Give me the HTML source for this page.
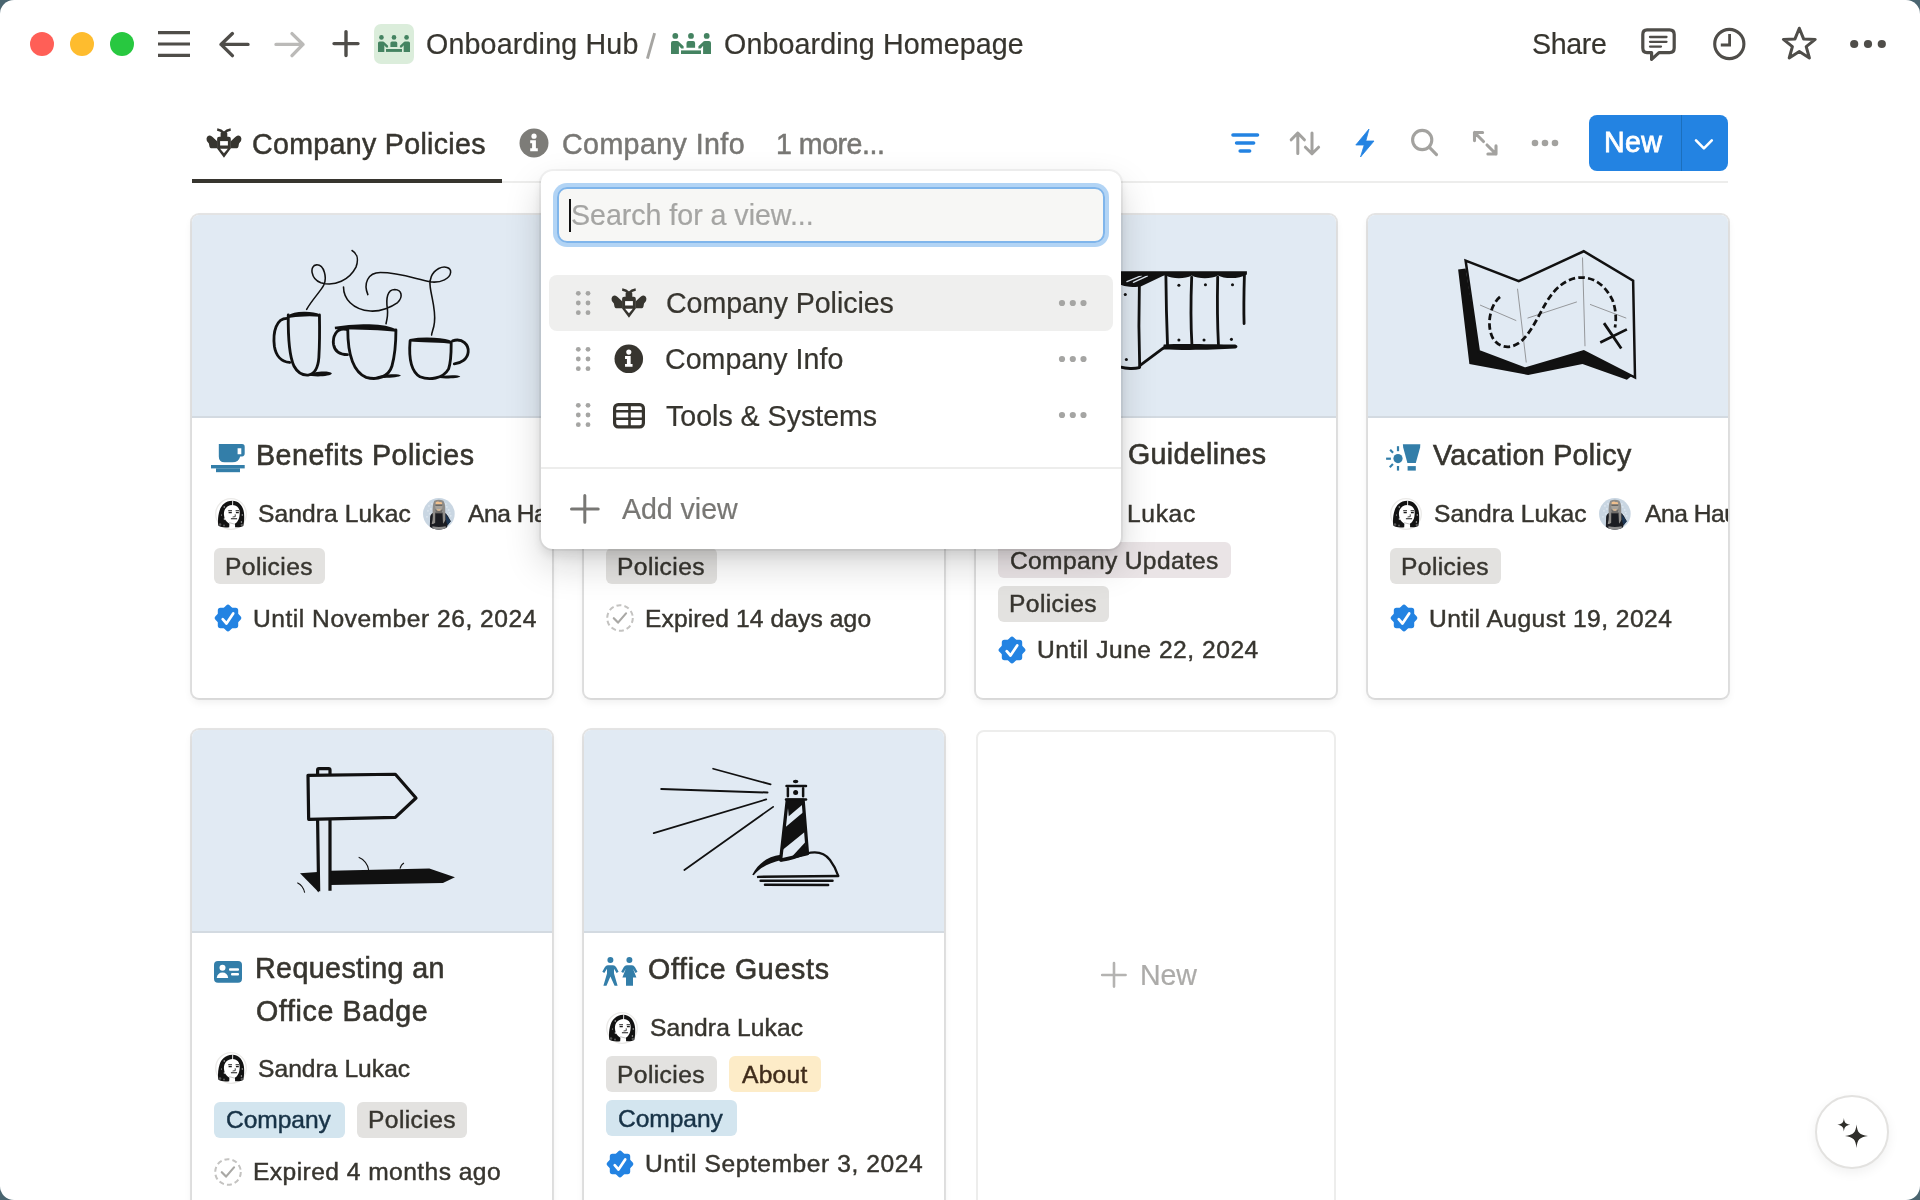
<!DOCTYPE html><html><head><meta charset="utf-8"><title>Onboarding Homepage</title><style>
html,body{margin:0;padding:0;width:1920px;height:1200px;overflow:hidden;background:#4a6570;}
#win{position:absolute;left:0;top:0;width:1920px;height:1200px;background:#fff;border-radius:14px;overflow:hidden;}
.a{position:absolute;}
.t{position:absolute;font-family:"Liberation Sans",sans-serif;white-space:nowrap;line-height:1;-webkit-font-smoothing:antialiased;will-change:transform;}
svg{position:absolute;overflow:visible;}
.card{position:absolute;width:360px;background:#fff;border-radius:7px;overflow:hidden;box-shadow:0 0 0 2px rgba(15,15,15,0.11),0 4px 8px rgba(15,15,15,0.07);}
.cover{position:absolute;left:0;top:0;width:360px;height:201px;background:#e1eaf3;border-bottom:2px solid #d3dae1;}
.tag{position:absolute;height:36px;border-radius:6px;background:#e3e2e0;}
</style></head><body><div id="win">
<div class="a" style="left:30px;top:32px;width:24px;height:24px;border-radius:50%;background:#ff5f57"></div>
<div class="a" style="left:70px;top:32px;width:24px;height:24px;border-radius:50%;background:#febc2e"></div>
<div class="a" style="left:110px;top:32px;width:24px;height:24px;border-radius:50%;background:#28c840"></div>
<svg style="left:0px;top:0px;width:1920px;height:80px" viewBox="0 0 1920 80" ><g stroke="#4f4d49" stroke-width="3.2" fill="none" stroke-linecap="butt">
<path d="M158,32.6 L190,32.6 M158,44 L190,44 M158,55.4 L190,55.4"/></g>
<g stroke="#4f4d49" stroke-width="3.4" fill="none" stroke-linecap="round" stroke-linejoin="round">
<path d="M248,44.4 L221,44.4 M232.4,33.6 L221,44.4 L232.4,55.6"/></g>
<g stroke="#bbbab8" stroke-width="3.4" fill="none" stroke-linecap="round" stroke-linejoin="round">
<path d="M276,44.4 L303,44.4 M292,33.6 L303,44.4 L292,55.6"/></g>
<g stroke="#4f4d49" stroke-width="3.4" fill="none" stroke-linecap="round">
<path d="M334,43.6 L358,43.6 M346,31.6 L346,55.6"/></g></svg>
<div class="a" style="left:374px;top:24px;width:40px;height:40px;border-radius:7px;background:#dbeddb"></div>
<svg style="left:378px;top:34.6px;width:32px;height:17px" viewBox="0 0 40 21" ><g fill="#448361">
<circle cx="4.3" cy="2.9" r="2.9"/><circle cx="20" cy="2.9" r="2.9"/><circle cx="35.7" cy="2.9" r="2.9"/>
<path d="M0,10 Q0,8 2,8 L6,8 Q7.4,8 8.3,9.2 L12.6,13.2 L12.6,15.6 L10.2,15.6 L7.9,12.8 L7.9,21 L0,21 Z"/>
<path d="M40,10 Q40,8 38,8 L34,8 Q32.6,8 31.7,9.2 L27.4,13.2 L27.4,15.6 L29.8,15.6 L32.1,12.8 L32.1,21 L40,21 Z"/>
<path d="M15.5,10 Q15.5,8 17.5,8 L22.1,8 Q24.1,8 24.1,10 L24.1,14.8 L15.5,14.8 Z"/>
<rect x="10" y="17.4" width="20" height="3.6"/></g></svg>
<svg style="left:671px;top:32.8px;width:40px;height:21px" viewBox="0 0 40 21" ><g fill="#448361">
<circle cx="4.3" cy="2.9" r="2.9"/><circle cx="20" cy="2.9" r="2.9"/><circle cx="35.7" cy="2.9" r="2.9"/>
<path d="M0,10 Q0,8 2,8 L6,8 Q7.4,8 8.3,9.2 L12.6,13.2 L12.6,15.6 L10.2,15.6 L7.9,12.8 L7.9,21 L0,21 Z"/>
<path d="M40,10 Q40,8 38,8 L34,8 Q32.6,8 31.7,9.2 L27.4,13.2 L27.4,15.6 L29.8,15.6 L32.1,12.8 L32.1,21 L40,21 Z"/>
<path d="M15.5,10 Q15.5,8 17.5,8 L22.1,8 Q24.1,8 24.1,10 L24.1,14.8 L15.5,14.8 Z"/>
<rect x="10" y="17.4" width="20" height="3.6"/></g></svg>
<div class="t" style="left:426.00px;top:30.00px;font-size:28.6px;font-weight:400;color:#37352f;letter-spacing:0.192px;-webkit-text-stroke:0.22px #37352f;">Onboarding Hub</div>
<svg style="left:640px;top:28px;width:20px;height:36px" viewBox="0 0 20 36" ><path d="M14.6,5.2 L7.4,30.6" stroke="#a6a5a2" stroke-width="2.9" stroke-linecap="butt"/></svg>
<div class="t" style="left:723.50px;top:30.00px;font-size:28.6px;font-weight:400;color:#37352f;letter-spacing:0.139px;-webkit-text-stroke:0.22px #37352f;">Onboarding Homepage</div>
<div class="t" style="left:1531.70px;top:30.20px;font-size:28.6px;font-weight:400;color:#37352f;letter-spacing:-0.350px;-webkit-text-stroke:0.22px #37352f;">Share</div>
<svg style="left:0px;top:0px;width:1920px;height:80px" viewBox="0 0 1920 80" ><g stroke="#4f4d49" stroke-width="3.2" fill="none" stroke-linejoin="round" stroke-linecap="round">
<path d="M1647,29.8 L1669.5,29.8 Q1674.2,29.8 1674.2,34.5 L1674.2,48 Q1674.2,52.6 1669.5,52.6 L1659,52.6 L1651.6,59.4 L1651.6,52.6 L1647,52.6 Q1642.8,52.6 1642.8,48 L1642.8,34.5 Q1642.8,29.8 1647,29.8 Z"/>
</g>
<g stroke="#4f4d49" stroke-width="2.3" stroke-linecap="round"><path d="M1650,37 L1666.5,37 M1650,41.8 L1666.5,41.8 M1650,46.6 L1661,46.6"/></g>
<circle cx="1729.3" cy="44" r="14.6" stroke="#4f4d49" stroke-width="3.1" fill="none"/>
<path d="M1729.6,34 L1729.6,45 L1720.8,45" stroke="#4f4d49" stroke-width="2.8" fill="none"/>
<path d="M1799.3,28.2 L1803.6,38.9 L1815.2,39.4 L1806.2,46.6 L1809.4,58 L1799.3,51.6 L1789.2,58 L1792.4,46.6 L1783.4,39.4 L1795,38.9 Z" stroke="#4f4d49" stroke-width="3" fill="none" stroke-linejoin="round"/>
<g fill="#4f4d49"><circle cx="1854.2" cy="44" r="4.1"/><circle cx="1868" cy="44" r="4.1"/><circle cx="1881.8" cy="44" r="4.1"/></g></svg>
<div class="a" style="left:192px;top:181px;width:1536px;height:2px;background:#ededec"></div>
<div class="a" style="left:192px;top:179px;width:310px;height:4px;background:#37352f"></div>
<svg style="left:206px;top:128px;width:36.0px;height:30.0px" viewBox="0 0 36 30" ><g fill="#37352f">
<path d="M0.5,10.8 Q1.2,7.4 3.9,7.5 Q5.2,7.6 6.6,9 L11.4,13.6 L11.4,20.2 L4.9,20.2 Q3.9,20.2 3.5,18.8 L2.9,15.6 Q0.1,13.2 0.5,10.8 Z"/>
<path d="M35.42,10.8 Q34.72,7.4 32.02,7.5 Q30.72,7.6 29.32,9 L24.52,13.6 L24.52,20.2 L31.02,20.2 Q32.02,20.2 32.42,18.8 L33.02,15.6 Q35.82,13.2 35.42,10.8 Z"/>
<path d="M14.6,5.6 Q14.6,4.2 16,4.2 L19.9,4.2 Q21.3,4.2 21.3,5.6 L21.3,8.7 L22.8,8.7 Q24.8,8.7 24.8,10.7 L24.8,20.6 L17.96,29.8 L11.1,20.6 L11.1,10.7 Q11.1,8.7 13.1,8.7 L14.6,8.7 Z"/>
</g>
<rect x="14.1" y="13.1" width="7.8" height="4.4" fill="#fff"/>
<path d="M14.1,20.8 L21.8,20.8 L17.96,25.3 Z" fill="#fff"/>
<path d="M11.2,1.5 Q15,2 17.96,5.2 Q20.9,2 24.7,1.5" stroke="#37352f" stroke-width="2.7" fill="none" stroke-linecap="butt" stroke-linejoin="round"/></svg>
<div class="t" style="left:252.30px;top:129.90px;font-size:28.6px;font-weight:400;color:#37352f;letter-spacing:0.313px;-webkit-text-stroke:0.5px #37352f;">Company Policies</div>
<svg style="left:519.0px;top:128.0px;width:30.0px;height:30.0px" viewBox="0 0 30 30" ><circle cx="15" cy="15" r="14.5" fill="#7d7c78"/>
<circle cx="15" cy="8.2" r="2.6" fill="#fff"/>
<path d="M11.2,12.2 L16.9,12.2 L16.9,20.2 L18.8,20.2 L18.8,23.2 L11.2,23.2 L11.2,20.2 L13.1,20.2 L13.1,15.2 L11.2,15.2 Z" fill="#fff"/></svg>
<div class="t" style="left:562.00px;top:129.90px;font-size:28.6px;font-weight:400;color:#787774;letter-spacing:0.418px;-webkit-text-stroke:0.5px #787774;">Company Info</div>
<div class="t" style="left:775.50px;top:129.90px;font-size:28.6px;font-weight:400;color:#787774;letter-spacing:-0.500px;-webkit-text-stroke:0.5px #787774;">1 more...</div>
<svg style="left:1200px;top:100px;width:560px;height:80px" viewBox="0 0 560 80" ><g stroke="#2383e2" stroke-width="3.6" stroke-linecap="round">
<path d="M33,35 L57.5,35 M36.6,43 L53.6,43 M40.2,51 L49.6,51"/></g>
<g stroke="#a3a29f" stroke-width="3" fill="none" stroke-linecap="round" stroke-linejoin="round">
<path d="M97.8,33 L97.8,53.5 M91.2,39.8 L97.8,33 L104.4,39.8"/>
<path d="M112,33 L112,53.8 M105.4,47.2 L112,53.8 L118.6,47.2"/>
</g>
<path d="M169,29 L155.8,45 L164.2,45 L160.5,57 L174,41 L165.8,41 Z" fill="#2383e2" stroke="#2383e2" stroke-width="0.8" stroke-linejoin="round"/>
<g stroke="#a3a29f" stroke-width="3.1" fill="none" stroke-linecap="round" stroke-linejoin="round">
<circle cx="222.2" cy="40" r="9.6"/><path d="M229.2,47.2 L236.5,54.6"/>
<path d="M274.5,32.5 L283.5,41.5 M274.5,40.6 L274.5,32.5 L282.6,32.5 M287,45 L296,54 M296,45.9 L296,54 L287.9,54"/>
</g>
<g fill="#a3a29f"><circle cx="335" cy="43" r="3.3"/><circle cx="345" cy="43" r="3.3"/><circle cx="355" cy="43" r="3.3"/></g></svg>
<div class="a" style="left:1589px;top:115px;width:139px;height:56px;border-radius:8px;background:#2383e2"></div>
<div class="a" style="left:1680.5px;top:115px;width:1.2px;height:56px;background:rgba(0,40,60,0.22)"></div>
<div class="t" style="left:1604.30px;top:128.00px;font-size:28.6px;font-weight:400;color:#fff;letter-spacing:0.350px;-webkit-text-stroke:0.8px #fff;">New</div>
<svg style="left:1680px;top:115px;width:48px;height:56px" viewBox="0 0 48 56" ><path d="M16,25.4 L23.9,33.3 L31.8,25.4" stroke="#fff" stroke-width="2.6" fill="none" stroke-linecap="round" stroke-linejoin="round"/></svg>
<div class="card" style="left:192px;top:215px;height:483px"><div class="cover"></div></div>
<div class="card" style="left:584px;top:215px;height:483px"><div class="cover"></div></div>
<div class="card" style="left:976px;top:215px;height:483px"><div class="cover"></div></div>
<div class="card" style="left:1368px;top:215px;height:483px"><div class="cover"></div></div>
<div class="card" style="left:192px;top:730px;height:600px"><div class="cover"></div></div>
<div class="card" style="left:584px;top:730px;height:600px"><div class="cover"></div></div>
<div class="a" style="left:976px;top:730px;width:356px;height:600px;border:2px solid #ededec;border-radius:8px"></div>
<svg style="left:250px;top:230px;width:240px;height:170px" viewBox="0 0 1694 1200" ><g stroke="#111" fill="none" stroke-linecap="round" stroke-linejoin="round" stroke-width="20">
<path d="M270,600 C268,780 282,900 310,960 C338,1012 378,1026 410,1024 C452,1018 480,978 486,900 C492,800 492,700 490,600"/>
<path d="M266,624 C185,620 160,720 172,820 C182,885 220,930 280,935"/>
<path d="M690,698 C690,850 716,995 820,1040 C900,1064 980,1034 1002,960 C1024,880 1030,780 1030,706"/>
<path d="M682,702 C605,684 582,760 590,810 C600,862 640,880 688,880"/>
<path d="M1130,782 C1120,900 1140,1000 1200,1036 C1262,1062 1362,1052 1402,980 C1422,920 1420,850 1420,792"/>
<path d="M1430,782 C1502,760 1545,812 1540,862 C1535,912 1490,940 1442,945"/>
</g>
<g stroke="#111" fill="none" stroke-linecap="round" stroke-linejoin="round" stroke-width="11">
<path d="M400,560 C440,490 500,430 520,390 C545,340 525,244 470,246 C418,250 428,345 500,372 C600,402 702,352 748,262 C770,202 752,162 720,145"/>
<path d="M660,402 C660,482 722,562 850,572 C922,577 1000,542 1042,512 C1082,472 1072,422 1022,420 C970,420 958,482 970,560 C975,600 965,640 960,662"/>
<path d="M832,456 C800,380 830,300 920,300 C1050,300 1152,340 1272,366 C1352,376 1412,340 1416,300 C1420,262 1372,252 1332,272 C1282,300 1262,352 1272,402 C1282,482 1312,562 1302,652 C1297,702 1282,722 1282,742"/>
</g>
<g fill="#111">
<path d="M270,612 C320,578 440,580 492,604 C440,598 330,600 270,612 Z" stroke="#111" stroke-width="18"/>
<path d="M600,692 C750,664 950,668 1032,710 C950,700 760,692 600,692 Z" stroke="#111" stroke-width="18"/>
<path d="M1130,778 C1230,760 1380,768 1422,794 C1360,786 1230,786 1130,778 Z" stroke="#111" stroke-width="18"/>
<path d="M400,1026 C450,996 560,992 578,1012 C572,1036 452,1040 400,1026 Z"/>
<path d="M880,1040 C930,1016 1050,1012 1066,1026 C1056,1044 930,1050 880,1040 Z"/>
<path d="M1300,1042 C1360,1024 1470,1020 1484,1034 C1474,1048 1360,1052 1300,1042 Z"/>
</g></svg>
<svg style="left:1115px;top:250px;width:150px;height:130px" viewBox="0 0 1385 1200" ><g stroke="#111" fill="none" stroke-linecap="round" stroke-linejoin="round" stroke-width="26">
<path d="M470,240 C472,500 478,700 485,880"/>
<path d="M708,250 C700,450 700,700 710,870"/>
<path d="M948,250 C944,450 946,700 955,870"/>
<path d="M1195,225 C1190,400 1188,560 1192,680"/>
<path d="M225,330 C218,600 222,900 228,1080"/>
<path d="M445,905 L232,1065"/>
<path d="M440,225 L232,325 C180,335 90,322 55,308"/>
<path d="M55,1082 C100,1096 180,1098 225,1086"/>
</g>
<path d="M55,205 L445,222 L232,322 C180,332 90,320 55,306 Z" fill="#111"/><path d="M110,292 L245,236 M170,298 L300,238" stroke="#e1eaf3" stroke-width="12" fill="none" stroke-linecap="round"/>
<path d="M55,195 L1218,195 L1218,225 C1150,268 1010,268 950,235 C890,268 770,268 708,235 C650,268 530,268 470,235 L55,240 Z" fill="#111"/>
<path d="M450,872 C600,862 900,870 1110,872 C1140,880 1135,905 1110,910 C900,925 600,925 440,918 Z" fill="#111"/>
<g fill="#111"><circle cx="590" cy="325" r="14"/><circle cx="835" cy="320" r="14"/><circle cx="1085" cy="320" r="14"/>
<circle cx="590" cy="830" r="14"/><circle cx="822" cy="830" r="14"/><circle cx="1075" cy="825" r="14"/>
<circle cx="95" cy="410" r="14"/><circle cx="105" cy="1010" r="14"/></g></svg>
<svg style="left:1440px;top:240px;width:210px;height:150px" viewBox="0 0 1680 1200" ><path d="M145,235 L205,228 L312,890 L680,1030 L1150,888 L1545,1078 L1495,1118 L1140,992 L705,1080 L235,992 Z" fill="#111"/>
<path d="M205,165 L630,330 L1150,90 L1545,325 L1560,1100 L1150,890 L680,1030 L310,890 Z" fill="#e1eaf3" stroke="#111" stroke-width="20" stroke-linejoin="miter"/>
<g stroke="#8a8c8e" stroke-width="7" fill="none">
<path d="M620,390 L690,980"/><path d="M1140,140 L1160,850"/>
<path d="M320,520 L610,645"/><path d="M700,625 L1095,495"/><path d="M1200,515 L1490,625"/></g>
<path d="M480,455 C400,520 370,680 420,780 C470,870 580,880 660,800 C740,720 790,600 850,500 C920,380 1020,300 1130,300 C1250,300 1330,380 1380,480 C1410,560 1410,640 1400,700" stroke="#111" stroke-width="22" fill="none" stroke-dasharray="52 26"/>
<path d="M1312,665 L1450,868 M1282,820 L1495,715" stroke="#111" stroke-width="22" fill="none"/></svg>
<svg style="left:280px;top:750px;width:200px;height:160px" viewBox="0 0 1500 1200" ><path d="M150,925 L282,915 L292,1068 Z" fill="#111"/>
<path d="M375,905 L1120,888 L1312,955 L1222,998 L375,1012 Z" fill="#111"/>
<g stroke="#111" stroke-width="24" fill="none" stroke-linejoin="round">
<path d="M210,190 L865,182 L1020,360 L865,505 L215,520 Z"/>
<path d="M282,185 L282,150 Q282,140 292,140 L365,140 Q375,140 375,150 L375,185"/>
<path d="M282,525 L290,1060 M375,525 L375,1055"/>
</g>
<g stroke="#111" stroke-width="8" fill="none">
<path d="M590,805 C630,820 660,860 665,900"/><path d="M900,890 C905,870 915,855 930,848"/>
<path d="M130,995 C160,1010 180,1040 185,1070"/></g></svg>
<svg style="left:640px;top:750px;width:220px;height:150px" viewBox="0 0 1760 1200" ><g stroke="#111" fill="none" stroke-linecap="round">
<path d="M585,150 L1045,275" stroke-width="14"/>
<path d="M170,312 L1020,340" stroke-width="16"/>
<path d="M110,665 L1010,395" stroke-width="14"/>
<path d="M355,960 L1065,455" stroke-width="14"/>
</g>
<path d="M1178,400 L1305,400 L1340,830 L1125,880 Z" fill="none" stroke="#111" stroke-width="26" stroke-linejoin="round"/>
<path d="M1178,400 L1305,400 L1308,430 L1190,530 Z" fill="#111"/>
<path d="M1160,620 L1315,490 L1325,650 L1140,800 Z" fill="#111"/>
<path d="M1320,740 L1340,830 L1200,870 Z" fill="#111"/>
<g stroke="#111" stroke-width="20" fill="none" stroke-linecap="round">
<path d="M1168,395 L1328,395"/><path d="M1172,287 L1328,287"/>
<path d="M1183,305 L1183,370 M1305,305 L1305,370"/>
<path d="M945,1015 L1585,1008"/><path d="M965,1045 L1540,1045"/><path d="M1000,1078 L1505,1080"/>
</g>
<circle cx="1245" cy="340" r="20" fill="#111"/>
<ellipse cx="1245" cy="252" rx="22" ry="14" fill="#111"/>
<path d="M898,998 C950,900 1030,850 1125,838 L1130,880 C1040,900 960,940 910,1002 Z" fill="#111"/>
<path d="M1130,885 C1200,880 1260,850 1330,830 C1400,810 1470,815 1520,880 C1550,920 1570,960 1585,1005" stroke="#111" stroke-width="18" fill="none" stroke-linecap="round"/></svg>
<svg style="left:211px;top:444px;width:34px;height:28.3px" viewBox="0 0 34 28.3" ><g fill="#337ea9">
<path d="M7.8,0 L31,0 Q33.7,0 33.7,2.8 L33.7,9.6 Q33.7,12.4 31,12.4 L29.2,12.4 Q27.5,18.3 21.5,18.3 L13.5,18.3 Q7.8,18.3 7.8,12.5 Z M26.6,4.3 L26.6,10.3 L30.3,10.3 L30.3,4.3 Z" fill-rule="evenodd"/>
<rect x="0" y="21" width="33.7" height="3.4"/>
<rect x="5" y="24.3" width="24" height="3.9"/></g></svg>
<div class="t" style="left:255.75px;top:440.80px;font-size:28.6px;font-weight:400;color:#37352f;letter-spacing:0.516px;-webkit-text-stroke:0.6px #37352f;">Benefits Policies</div>
<svg style="left:214.5px;top:498.2px;width:32px;height:32px" viewBox="0 0 32 32" ><circle cx="16" cy="16" r="15.3" fill="#fff" stroke="#ebeae8" stroke-width="1.3"/>
<path fill-rule="evenodd" fill="#121212" d="M17.3,2.8 C10,2.8 6,8 4.6,12.5 C3.4,16 2.6,21 3.2,27.5 C6,29.5 10.5,29.6 14.2,29.2 L14.4,25.8 C11,24 9,20.5 8.9,16.3 C8.8,10.5 12.5,6.9 17.6,6.9 C22.5,6.9 24.7,10.5 24.7,15 C24.7,20 23,24 20,25.6 L20.1,29.2 C23.5,29.6 26.5,29 28.3,28 C29.2,24 29.4,19 29,15 C28.4,9 24.5,2.8 17.3,2.8 Z"/>
<path d="M17.7,2.4 L17.6,7.2" stroke="#fff" stroke-width="0.9"/>
<g fill="#fff" opacity="0.7"><circle cx="9.3" cy="9" r="0.8"/><circle cx="9.6" cy="21.1" r="1"/><circle cx="27.3" cy="17" r="0.7"/><circle cx="6.5" cy="17" r="0.6"/><circle cx="26.4" cy="24" r="0.7"/></g>
<g fill="#888" opacity="0.6"><circle cx="5" cy="26.5" r="1.3"/><circle cx="26.8" cy="27" r="1.2"/><circle cx="9" cy="27.5" r="1"/></g>
<path d="M13.2,12.7 L17,12.7 M13.6,14.6 L16.8,14.6 M20.6,12.7 L24,12.7 M20.9,14.6 L23.8,14.6 M15.9,20.7 L22.1,20.7" stroke="#1a1a1a" stroke-width="1.05" fill="none"/>
<path d="M20.2,16.3 L20.3,18.6 L17.6,19" stroke="#1a1a1a" stroke-width="0.8" fill="none"/>
<path d="M14.2,24.7 L20,26.2" stroke="#999" stroke-width="0.6" fill="none"/></svg>
<div class="t" style="left:258.00px;top:501.70px;font-size:24.6px;font-weight:400;color:#37352f;letter-spacing:0.091px;-webkit-text-stroke:0.45px #37352f;">Sandra Lukac</div>
<svg style="left:423px;top:498px;width:31.7px;height:31.7px" viewBox="0 0 32 32" ><defs><clipPath id="ac1"><circle cx="16" cy="16" r="16"/></clipPath></defs>
<circle cx="16" cy="16" r="16" fill="#c9d6e2"/>
<g fill="#e3ebf3" opacity="0.8"><circle cx="6" cy="8" r="0.9"/><circle cx="8" cy="11" r="0.9"/><circle cx="5" cy="13" r="0.9"/><circle cx="7" cy="16" r="0.9"/><circle cx="9" cy="6" r="0.9"/><circle cx="4" cy="19" r="0.9"/><circle cx="24" cy="9" r="0.9"/><circle cx="26" cy="12" r="0.9"/><circle cx="27" cy="15" r="0.9"/><circle cx="23" cy="6" r="0.9"/><circle cx="28" cy="18" r="0.9"/><circle cx="25" cy="17" r="0.9"/></g>
<g clip-path="url(#ac1)">
<path d="M6.8,33 L7.2,19 Q7.8,15.2 11.5,14.6 L20.5,14.6 Q23.6,15 25,18 L28,23.5 L24.8,27.5 L23.8,31 L22,33 Z" fill="#1b1d22"/>
<path d="M22.5,15.6 L28,23.5 L24.8,27.5 L23.6,24 Z" fill="#1c3552"/>
<path d="M11.4,2.8 Q16,0.8 20.6,2.8 Q22.3,5.5 22.4,9.5 L22.6,22 Q21.6,25 20.2,26 L19.6,13 L12.4,13 L12.3,25 Q10,27 8.8,26 Q10.3,21 9.8,16 Q9.6,12 9.9,9 Q10.1,5.5 11.4,2.8 Z" fill="#8e8c89"/>
<rect x="12.4" y="11.5" width="7.2" height="4" fill="#6f6d6a"/><ellipse cx="16" cy="8.6" rx="3.7" ry="4.6" fill="#a7a29b"/>
<path d="M12.8,4.4 Q15,3 17,4.2 Q18.6,3.4 19.4,5 L19.2,6.2 L12.7,6.2 Z" fill="#f0c08e"/>
<path d="M12.6,7.2 L19.4,7.2" stroke="#3a3a3a" stroke-width="0.9"/>
<path d="M14.2,10.8 Q16,12.4 17.8,10.8 L17.2,12.6 L14.8,12.6 Z" fill="#f0c08e"/>
<path d="M9.5,28.6 Q16,30 23,28.6 L23,33 L9.5,33 Z" fill="#8d8d8d"/>
</g></svg>
<div class="t" style="left:468.00px;top:501.70px;font-size:24.6px;font-weight:400;color:#37352f;letter-spacing:-0.450px;-webkit-text-stroke:0.45px #37352f;width:84.0px;overflow:hidden;">Ana Hauser</div>
<div class="tag" style="left:214px;top:548px;width:111px;background:#e3e2e0"></div>
<div class="t" style="left:225.20px;top:555.00px;font-size:24.6px;font-weight:400;color:#37352f;letter-spacing:0.400px;-webkit-text-stroke:0.45px #37352f;">Policies</div>
<svg style="left:214.3px;top:604.4px;width:28px;height:28px" viewBox="0 0 28 28" ><g fill="#2383e2"><rect x="3.8" y="3.8" width="20.4" height="20.4" rx="2.6"/>
<rect x="3.8" y="3.8" width="20.4" height="20.4" rx="2.6" transform="rotate(45 14 14)"/></g>
<path d="M8.7,15.2 L12.5,19.5 L19.2,9.4" stroke="#fff" stroke-width="2.7" fill="none" stroke-linecap="round" stroke-linejoin="round"/></svg>
<div class="t" style="left:253.30px;top:607.20px;font-size:24.6px;font-weight:400;color:#37352f;letter-spacing:0.514px;-webkit-text-stroke:0.45px #37352f;">Until November 26, 2024</div>
<div class="tag" style="left:606px;top:548px;width:111px;background:#e3e2e0"></div>
<div class="t" style="left:617.20px;top:555.00px;font-size:24.6px;font-weight:400;color:#37352f;letter-spacing:0.400px;-webkit-text-stroke:0.45px #37352f;">Policies</div>
<svg style="left:606px;top:604px;width:28px;height:28px" viewBox="0 0 28 28" ><circle cx="14" cy="14" r="12.8" fill="none" stroke="#c4c3c1" stroke-width="2" stroke-dasharray="5 3.05"/>
<path d="M7.8,14.2 L12,18.6 L20,9.4" stroke="#a9a8a5" stroke-width="2.2" fill="none" stroke-linecap="round" stroke-linejoin="round"/></svg>
<div class="t" style="left:645.40px;top:607.20px;font-size:24.6px;font-weight:400;color:#37352f;letter-spacing:0.103px;-webkit-text-stroke:0.45px #37352f;">Expired 14 days ago</div>
<div class="t" style="left:1128.00px;top:440.40px;font-size:28.6px;font-weight:400;color:#37352f;letter-spacing:0.333px;-webkit-text-stroke:0.6px #37352f;">Guidelines</div>
<div class="t" style="left:1127.00px;top:501.70px;font-size:24.6px;font-weight:400;color:#37352f;letter-spacing:0.650px;-webkit-text-stroke:0.45px #37352f;">Lukac</div>
<div class="tag" style="left:998px;top:542px;width:232.6px;background:#eae4e6"></div>
<div class="t" style="left:1009.80px;top:548.50px;font-size:24.6px;font-weight:400;color:#37352f;letter-spacing:0.336px;-webkit-text-stroke:0.45px #37352f;">Company Updates</div>
<div class="tag" style="left:998px;top:586.2px;width:110.7px;background:#e3e2e0"></div>
<div class="t" style="left:1009.20px;top:592.30px;font-size:24.6px;font-weight:400;color:#37352f;letter-spacing:0.400px;-webkit-text-stroke:0.45px #37352f;">Policies</div>
<svg style="left:998.2px;top:636px;width:28px;height:28px" viewBox="0 0 28 28" ><g fill="#2383e2"><rect x="3.8" y="3.8" width="20.4" height="20.4" rx="2.6"/>
<rect x="3.8" y="3.8" width="20.4" height="20.4" rx="2.6" transform="rotate(45 14 14)"/></g>
<path d="M8.7,15.2 L12.5,19.5 L19.2,9.4" stroke="#fff" stroke-width="2.7" fill="none" stroke-linecap="round" stroke-linejoin="round"/></svg>
<div class="t" style="left:1037.40px;top:638.00px;font-size:24.6px;font-weight:400;color:#37352f;letter-spacing:0.519px;-webkit-text-stroke:0.45px #37352f;">Until June 22, 2024</div>
<svg style="left:1380px;top:435px;width:41px;height:36px" viewBox="0 0 41 36" ><g fill="#337ea9">
<circle cx="18" cy="23.6" r="4.6"/>
<rect x="16.9" y="11.2" width="2.2" height="5"/>
<rect x="16.9" y="31" width="2.2" height="4.6"/>
<rect x="6.1" y="22.6" width="4.8" height="2.2"/>
<path d="M9.4,15.6 L10.9,14.1 L13.8,17 L12.3,18.5 Z"/>
<path d="M9,31.4 L10.5,32.9 L13.7,29.8 L12.2,28.3 Z"/>
<path d="M22.9,9.2 L40.3,9.2 L40.1,12.5 L35.8,28 L27.4,28 L23.2,12.5 Z"/>
<rect x="27.6" y="31.1" width="8.2" height="4.5"/></g></svg>
<div class="t" style="left:1433.20px;top:440.80px;font-size:28.6px;font-weight:400;color:#37352f;letter-spacing:0.343px;-webkit-text-stroke:0.6px #37352f;">Vacation Policy</div>
<svg style="left:1390.3px;top:498.1px;width:32px;height:32px" viewBox="0 0 32 32" ><circle cx="16" cy="16" r="15.3" fill="#fff" stroke="#ebeae8" stroke-width="1.3"/>
<path fill-rule="evenodd" fill="#121212" d="M17.3,2.8 C10,2.8 6,8 4.6,12.5 C3.4,16 2.6,21 3.2,27.5 C6,29.5 10.5,29.6 14.2,29.2 L14.4,25.8 C11,24 9,20.5 8.9,16.3 C8.8,10.5 12.5,6.9 17.6,6.9 C22.5,6.9 24.7,10.5 24.7,15 C24.7,20 23,24 20,25.6 L20.1,29.2 C23.5,29.6 26.5,29 28.3,28 C29.2,24 29.4,19 29,15 C28.4,9 24.5,2.8 17.3,2.8 Z"/>
<path d="M17.7,2.4 L17.6,7.2" stroke="#fff" stroke-width="0.9"/>
<g fill="#fff" opacity="0.7"><circle cx="9.3" cy="9" r="0.8"/><circle cx="9.6" cy="21.1" r="1"/><circle cx="27.3" cy="17" r="0.7"/><circle cx="6.5" cy="17" r="0.6"/><circle cx="26.4" cy="24" r="0.7"/></g>
<g fill="#888" opacity="0.6"><circle cx="5" cy="26.5" r="1.3"/><circle cx="26.8" cy="27" r="1.2"/><circle cx="9" cy="27.5" r="1"/></g>
<path d="M13.2,12.7 L17,12.7 M13.6,14.6 L16.8,14.6 M20.6,12.7 L24,12.7 M20.9,14.6 L23.8,14.6 M15.9,20.7 L22.1,20.7" stroke="#1a1a1a" stroke-width="1.05" fill="none"/>
<path d="M20.2,16.3 L20.3,18.6 L17.6,19" stroke="#1a1a1a" stroke-width="0.8" fill="none"/>
<path d="M14.2,24.7 L20,26.2" stroke="#999" stroke-width="0.6" fill="none"/></svg>
<div class="t" style="left:1434.00px;top:501.70px;font-size:24.6px;font-weight:400;color:#37352f;letter-spacing:0.073px;-webkit-text-stroke:0.45px #37352f;">Sandra Lukac</div>
<svg style="left:1599.1px;top:498px;width:31.7px;height:31.7px" viewBox="0 0 32 32" ><defs><clipPath id="ac2"><circle cx="16" cy="16" r="16"/></clipPath></defs>
<circle cx="16" cy="16" r="16" fill="#c9d6e2"/>
<g fill="#e3ebf3" opacity="0.8"><circle cx="6" cy="8" r="0.9"/><circle cx="8" cy="11" r="0.9"/><circle cx="5" cy="13" r="0.9"/><circle cx="7" cy="16" r="0.9"/><circle cx="9" cy="6" r="0.9"/><circle cx="4" cy="19" r="0.9"/><circle cx="24" cy="9" r="0.9"/><circle cx="26" cy="12" r="0.9"/><circle cx="27" cy="15" r="0.9"/><circle cx="23" cy="6" r="0.9"/><circle cx="28" cy="18" r="0.9"/><circle cx="25" cy="17" r="0.9"/></g>
<g clip-path="url(#ac2)">
<path d="M6.8,33 L7.2,19 Q7.8,15.2 11.5,14.6 L20.5,14.6 Q23.6,15 25,18 L28,23.5 L24.8,27.5 L23.8,31 L22,33 Z" fill="#1b1d22"/>
<path d="M22.5,15.6 L28,23.5 L24.8,27.5 L23.6,24 Z" fill="#1c3552"/>
<path d="M11.4,2.8 Q16,0.8 20.6,2.8 Q22.3,5.5 22.4,9.5 L22.6,22 Q21.6,25 20.2,26 L19.6,13 L12.4,13 L12.3,25 Q10,27 8.8,26 Q10.3,21 9.8,16 Q9.6,12 9.9,9 Q10.1,5.5 11.4,2.8 Z" fill="#8e8c89"/>
<rect x="12.4" y="11.5" width="7.2" height="4" fill="#6f6d6a"/><ellipse cx="16" cy="8.6" rx="3.7" ry="4.6" fill="#a7a29b"/>
<path d="M12.8,4.4 Q15,3 17,4.2 Q18.6,3.4 19.4,5 L19.2,6.2 L12.7,6.2 Z" fill="#f0c08e"/>
<path d="M12.6,7.2 L19.4,7.2" stroke="#3a3a3a" stroke-width="0.9"/>
<path d="M14.2,10.8 Q16,12.4 17.8,10.8 L17.2,12.6 L14.8,12.6 Z" fill="#f0c08e"/>
<path d="M9.5,28.6 Q16,30 23,28.6 L23,33 L9.5,33 Z" fill="#8d8d8d"/>
</g></svg>
<div class="t" style="left:1645.00px;top:501.70px;font-size:24.6px;font-weight:400;color:#37352f;letter-spacing:-0.450px;-webkit-text-stroke:0.45px #37352f;width:83.0px;overflow:hidden;">Ana Hauser</div>
<div class="tag" style="left:1390px;top:548.2px;width:111px;background:#e3e2e0"></div>
<div class="t" style="left:1401.20px;top:555.00px;font-size:24.6px;font-weight:400;color:#37352f;letter-spacing:0.400px;-webkit-text-stroke:0.45px #37352f;">Policies</div>
<svg style="left:1390.4px;top:604.4px;width:28px;height:28px" viewBox="0 0 28 28" ><g fill="#2383e2"><rect x="3.8" y="3.8" width="20.4" height="20.4" rx="2.6"/>
<rect x="3.8" y="3.8" width="20.4" height="20.4" rx="2.6" transform="rotate(45 14 14)"/></g>
<path d="M8.7,15.2 L12.5,19.5 L19.2,9.4" stroke="#fff" stroke-width="2.7" fill="none" stroke-linecap="round" stroke-linejoin="round"/></svg>
<div class="t" style="left:1429.30px;top:607.00px;font-size:24.6px;font-weight:400;color:#37352f;letter-spacing:0.455px;-webkit-text-stroke:0.45px #37352f;">Until August 19, 2024</div>
<svg style="left:214px;top:961px;width:28px;height:22px" viewBox="0 0 28 22" ><rect x="0" y="0" width="28" height="21.8" rx="4" fill="#337ea9"/>
<circle cx="8.5" cy="6.7" r="3" fill="#fff"/>
<path d="M2.7,17 Q3.6,11.5 8.5,11.5 Q13.4,11.5 14.2,17 Z" fill="#fff"/>
<rect x="15" y="7.3" width="10" height="2.4" rx="1" fill="#fff"/>
<rect x="17" y="12.1" width="8" height="2.4" rx="1" fill="#fff"/></svg>
<div class="t" style="left:255.40px;top:954.40px;font-size:28.6px;font-weight:400;color:#37352f;letter-spacing:0.425px;-webkit-text-stroke:0.6px #37352f;">Requesting an</div>
<div class="t" style="left:256.40px;top:996.50px;font-size:28.6px;font-weight:400;color:#37352f;letter-spacing:0.627px;-webkit-text-stroke:0.6px #37352f;">Office Badge</div>
<svg style="left:214.8px;top:1052.4px;width:32px;height:32px" viewBox="0 0 32 32" ><circle cx="16" cy="16" r="15.3" fill="#fff" stroke="#ebeae8" stroke-width="1.3"/>
<path fill-rule="evenodd" fill="#121212" d="M17.3,2.8 C10,2.8 6,8 4.6,12.5 C3.4,16 2.6,21 3.2,27.5 C6,29.5 10.5,29.6 14.2,29.2 L14.4,25.8 C11,24 9,20.5 8.9,16.3 C8.8,10.5 12.5,6.9 17.6,6.9 C22.5,6.9 24.7,10.5 24.7,15 C24.7,20 23,24 20,25.6 L20.1,29.2 C23.5,29.6 26.5,29 28.3,28 C29.2,24 29.4,19 29,15 C28.4,9 24.5,2.8 17.3,2.8 Z"/>
<path d="M17.7,2.4 L17.6,7.2" stroke="#fff" stroke-width="0.9"/>
<g fill="#fff" opacity="0.7"><circle cx="9.3" cy="9" r="0.8"/><circle cx="9.6" cy="21.1" r="1"/><circle cx="27.3" cy="17" r="0.7"/><circle cx="6.5" cy="17" r="0.6"/><circle cx="26.4" cy="24" r="0.7"/></g>
<g fill="#888" opacity="0.6"><circle cx="5" cy="26.5" r="1.3"/><circle cx="26.8" cy="27" r="1.2"/><circle cx="9" cy="27.5" r="1"/></g>
<path d="M13.2,12.7 L17,12.7 M13.6,14.6 L16.8,14.6 M20.6,12.7 L24,12.7 M20.9,14.6 L23.8,14.6 M15.9,20.7 L22.1,20.7" stroke="#1a1a1a" stroke-width="1.05" fill="none"/>
<path d="M20.2,16.3 L20.3,18.6 L17.6,19" stroke="#1a1a1a" stroke-width="0.8" fill="none"/>
<path d="M14.2,24.7 L20,26.2" stroke="#999" stroke-width="0.6" fill="none"/></svg>
<div class="t" style="left:258.00px;top:1056.70px;font-size:24.6px;font-weight:400;color:#37352f;letter-spacing:0.036px;-webkit-text-stroke:0.45px #37352f;">Sandra Lukac</div>
<div class="tag" style="left:214px;top:1102px;width:130.7px;background:#d3e5ef"></div>
<div class="t" style="left:226.00px;top:1108.00px;font-size:24.6px;font-weight:400;color:#183347;letter-spacing:-0.067px;-webkit-text-stroke:0.45px #183347;">Company</div>
<div class="tag" style="left:357px;top:1102px;width:109.6px;background:#e3e2e0"></div>
<div class="t" style="left:368.20px;top:1108.00px;font-size:24.6px;font-weight:400;color:#37352f;letter-spacing:0.400px;-webkit-text-stroke:0.45px #37352f;">Policies</div>
<svg style="left:214px;top:1158px;width:28px;height:28px" viewBox="0 0 28 28" ><circle cx="14" cy="14" r="12.8" fill="none" stroke="#c4c3c1" stroke-width="2" stroke-dasharray="5 3.05"/>
<path d="M7.8,14.2 L12,18.6 L20,9.4" stroke="#a9a8a5" stroke-width="2.2" fill="none" stroke-linecap="round" stroke-linejoin="round"/></svg>
<div class="t" style="left:253.00px;top:1160.20px;font-size:24.6px;font-weight:400;color:#37352f;letter-spacing:0.442px;-webkit-text-stroke:0.45px #37352f;">Expired 4 months ago</div>
<svg style="left:602px;top:956.8px;width:36px;height:29px" viewBox="0 0 36 29" ><g fill="#337ea9">
<circle cx="8.4" cy="3.1" r="3"/><circle cx="27.4" cy="3.1" r="3"/>
<path d="M5.8,8.2 L11,8.2 Q13,8.2 14.2,10.3 L16.6,14.8 L14.6,16 L12,11.8 L12,16.6 L15.6,28.8 L12.6,28.8 L8.4,19.6 L4.5,28.8 L1.4,28.8 L5,16.6 L5,11.8 L2.3,16 L0.3,14.8 L2.8,10.3 Q4,8.2 5.8,8.2 Z"/>
<path d="M24.8,8.2 L30,8.2 Q31.8,8.2 33,10.3 L35.5,14.8 L33.5,16 L31,11.8 L34.4,20.5 L31,20.5 L31,28.8 L24,28.8 L24,20.5 L20.4,20.5 L23.8,11.8 L21.2,16 L19.2,14.8 L21.7,10.3 Q22.9,8.2 24.8,8.2 Z"/>
</g></svg>
<div class="t" style="left:647.75px;top:954.50px;font-size:28.6px;font-weight:400;color:#37352f;letter-spacing:0.688px;-webkit-text-stroke:0.6px #37352f;">Office Guests</div>
<svg style="left:606px;top:1012.2px;width:32px;height:32px" viewBox="0 0 32 32" ><circle cx="16" cy="16" r="15.3" fill="#fff" stroke="#ebeae8" stroke-width="1.3"/>
<path fill-rule="evenodd" fill="#121212" d="M17.3,2.8 C10,2.8 6,8 4.6,12.5 C3.4,16 2.6,21 3.2,27.5 C6,29.5 10.5,29.6 14.2,29.2 L14.4,25.8 C11,24 9,20.5 8.9,16.3 C8.8,10.5 12.5,6.9 17.6,6.9 C22.5,6.9 24.7,10.5 24.7,15 C24.7,20 23,24 20,25.6 L20.1,29.2 C23.5,29.6 26.5,29 28.3,28 C29.2,24 29.4,19 29,15 C28.4,9 24.5,2.8 17.3,2.8 Z"/>
<path d="M17.7,2.4 L17.6,7.2" stroke="#fff" stroke-width="0.9"/>
<g fill="#fff" opacity="0.7"><circle cx="9.3" cy="9" r="0.8"/><circle cx="9.6" cy="21.1" r="1"/><circle cx="27.3" cy="17" r="0.7"/><circle cx="6.5" cy="17" r="0.6"/><circle cx="26.4" cy="24" r="0.7"/></g>
<g fill="#888" opacity="0.6"><circle cx="5" cy="26.5" r="1.3"/><circle cx="26.8" cy="27" r="1.2"/><circle cx="9" cy="27.5" r="1"/></g>
<path d="M13.2,12.7 L17,12.7 M13.6,14.6 L16.8,14.6 M20.6,12.7 L24,12.7 M20.9,14.6 L23.8,14.6 M15.9,20.7 L22.1,20.7" stroke="#1a1a1a" stroke-width="1.05" fill="none"/>
<path d="M20.2,16.3 L20.3,18.6 L17.6,19" stroke="#1a1a1a" stroke-width="0.8" fill="none"/>
<path d="M14.2,24.7 L20,26.2" stroke="#999" stroke-width="0.6" fill="none"/></svg>
<div class="t" style="left:649.80px;top:1016.25px;font-size:24.6px;font-weight:400;color:#37352f;letter-spacing:0.109px;-webkit-text-stroke:0.45px #37352f;">Sandra Lukac</div>
<div class="tag" style="left:606px;top:1056.2px;width:110.9px;background:#e3e2e0"></div>
<div class="t" style="left:617.20px;top:1063.00px;font-size:24.6px;font-weight:400;color:#37352f;letter-spacing:0.400px;-webkit-text-stroke:0.45px #37352f;">Policies</div>
<div class="tag" style="left:729px;top:1056.2px;width:92px;background:#fdecc8"></div>
<div class="t" style="left:742.00px;top:1063.00px;font-size:24.6px;font-weight:400;color:#402c1b;letter-spacing:0.250px;-webkit-text-stroke:0.45px #402c1b;">About</div>
<div class="tag" style="left:606px;top:1100px;width:131px;background:#d3e5ef"></div>
<div class="t" style="left:618.00px;top:1107.00px;font-size:24.6px;font-weight:400;color:#183347;letter-spacing:-0.067px;-webkit-text-stroke:0.45px #183347;">Company</div>
<svg style="left:606.3px;top:1150px;width:28px;height:28px" viewBox="0 0 28 28" ><g fill="#2383e2"><rect x="3.8" y="3.8" width="20.4" height="20.4" rx="2.6"/>
<rect x="3.8" y="3.8" width="20.4" height="20.4" rx="2.6" transform="rotate(45 14 14)"/></g>
<path d="M8.7,15.2 L12.5,19.5 L19.2,9.4" stroke="#fff" stroke-width="2.7" fill="none" stroke-linecap="round" stroke-linejoin="round"/></svg>
<div class="t" style="left:645.00px;top:1152.30px;font-size:24.6px;font-weight:400;color:#37352f;letter-spacing:0.568px;-webkit-text-stroke:0.45px #37352f;">Until September 3, 2024</div>
<svg style="left:1100px;top:960px;width:30px;height:30px" viewBox="0 0 30 30" ><path d="M2.2,15 L25.6,15 M14,3 L14,26.6" stroke="#b4b3b1" stroke-width="2.6" stroke-linecap="round"/></svg>
<div class="t" style="left:1140.20px;top:960.70px;font-size:28.6px;font-weight:400;color:#acaba9;letter-spacing:-0.150px;-webkit-text-stroke:0.22px #acaba9;">New</div>
<div class="a" style="left:541px;top:171px;width:580px;height:378px;background:#fff;border-radius:12px;box-shadow:0 0 0 2px rgba(15,15,15,0.05),0 6px 12px rgba(15,15,15,0.09),0 16px 36px rgba(15,15,15,0.17)"></div>
<div class="a" style="left:557px;top:187px;width:548px;height:56px;border-radius:10px;background:#f7f7f5;box-shadow:inset 0 0 0 2px rgba(35,131,226,0.57),0 0 0 4px rgba(35,131,226,0.35)"></div>
<div class="a" style="left:569px;top:199px;width:2.4px;height:33px;background:#111"></div>
<div class="t" style="left:570.50px;top:200.60px;font-size:28.6px;font-weight:400;color:#a5a5a3;letter-spacing:-0.026px;-webkit-text-stroke:0.22px #a5a5a3;">Search for a view...</div>
<div class="a" style="left:549px;top:275px;width:564px;height:56px;border-radius:8px;background:#efefee"></div>
<svg style="left:0px;top:0px;width:1920px;height:600px" viewBox="0 0 1920 600" ><g fill="#a5a5a3"><circle cx="578.3" cy="293.3" r="2.4"/><circle cx="578.3" cy="303" r="2.4"/><circle cx="578.3" cy="312.7" r="2.4"/><circle cx="588" cy="293.3" r="2.4"/><circle cx="588" cy="303" r="2.4"/><circle cx="588" cy="312.7" r="2.4"/><circle cx="1062" cy="303" r="3.1"/><circle cx="1072.8" cy="303" r="3.1"/><circle cx="1083.5" cy="303" r="3.1"/><circle cx="578.3" cy="349.3" r="2.4"/><circle cx="578.3" cy="359" r="2.4"/><circle cx="578.3" cy="368.7" r="2.4"/><circle cx="588" cy="349.3" r="2.4"/><circle cx="588" cy="359" r="2.4"/><circle cx="588" cy="368.7" r="2.4"/><circle cx="1062" cy="359" r="3.1"/><circle cx="1072.8" cy="359" r="3.1"/><circle cx="1083.5" cy="359" r="3.1"/><circle cx="578.3" cy="405.3" r="2.4"/><circle cx="578.3" cy="415" r="2.4"/><circle cx="578.3" cy="424.7" r="2.4"/><circle cx="588" cy="405.3" r="2.4"/><circle cx="588" cy="415" r="2.4"/><circle cx="588" cy="424.7" r="2.4"/><circle cx="1062" cy="415" r="3.1"/><circle cx="1072.8" cy="415" r="3.1"/><circle cx="1083.5" cy="415" r="3.1"/></g></svg>
<svg style="left:611px;top:288.3px;width:36.0px;height:30.0px" viewBox="0 0 36 30" ><g fill="#37352f">
<path d="M0.5,10.8 Q1.2,7.4 3.9,7.5 Q5.2,7.6 6.6,9 L11.4,13.6 L11.4,20.2 L4.9,20.2 Q3.9,20.2 3.5,18.8 L2.9,15.6 Q0.1,13.2 0.5,10.8 Z"/>
<path d="M35.42,10.8 Q34.72,7.4 32.02,7.5 Q30.72,7.6 29.32,9 L24.52,13.6 L24.52,20.2 L31.02,20.2 Q32.02,20.2 32.42,18.8 L33.02,15.6 Q35.82,13.2 35.42,10.8 Z"/>
<path d="M14.6,5.6 Q14.6,4.2 16,4.2 L19.9,4.2 Q21.3,4.2 21.3,5.6 L21.3,8.7 L22.8,8.7 Q24.8,8.7 24.8,10.7 L24.8,20.6 L17.96,29.8 L11.1,20.6 L11.1,10.7 Q11.1,8.7 13.1,8.7 L14.6,8.7 Z"/>
</g>
<rect x="14.1" y="13.1" width="7.8" height="4.4" fill="#fff"/>
<path d="M14.1,20.8 L21.8,20.8 L17.96,25.3 Z" fill="#fff"/>
<path d="M11.2,1.5 Q15,2 17.96,5.2 Q20.9,2 24.7,1.5" stroke="#37352f" stroke-width="2.7" fill="none" stroke-linecap="butt" stroke-linejoin="round"/></svg>
<svg style="left:614.2068965517242px;top:344.2068965517241px;width:29.586206896551726px;height:29.586206896551726px" viewBox="0 0 30 30" ><circle cx="15" cy="15" r="14.5" fill="#37352f"/>
<circle cx="15" cy="8.2" r="2.6" fill="#fff"/>
<path d="M11.2,12.2 L16.9,12.2 L16.9,20.2 L18.8,20.2 L18.8,23.2 L11.2,23.2 L11.2,20.2 L13.1,20.2 L13.1,15.2 L11.2,15.2 Z" fill="#fff"/></svg>
<svg style="left:613px;top:403px;width:32px;height:25.5px" viewBox="0 0 32 25.5" ><rect x="1.6" y="1.6" width="28.8" height="22.3" rx="3.6" stroke="#37352f" stroke-width="3.2" fill="none"/><path d="M1.6,8.2 L30.4,8.2 M1.6,15.8 L30.4,15.8 M16.5,1.6 L16.5,23.9" stroke="#37352f" stroke-width="2.6"/></svg>
<div class="t" style="left:665.50px;top:289.00px;font-size:28.6px;font-weight:400;color:#37352f;letter-spacing:-0.067px;-webkit-text-stroke:0.22px #37352f;">Company Policies</div>
<div class="t" style="left:665.20px;top:345.30px;font-size:28.6px;font-weight:400;color:#37352f;letter-spacing:0.027px;-webkit-text-stroke:0.22px #37352f;">Company Info</div>
<div class="t" style="left:666.20px;top:401.50px;font-size:28.6px;font-weight:400;color:#37352f;letter-spacing:-0.014px;-webkit-text-stroke:0.22px #37352f;">Tools &amp; Systems</div>
<div class="a" style="left:541px;top:467px;width:580px;height:2px;background:#ededec"></div>
<svg style="left:560px;top:490px;width:40px;height:40px" viewBox="0 0 40 40" ><path d="M11.5,19 L38.2,19 M24.8,5.6 L24.8,32.2" stroke="#787774" stroke-width="3" stroke-linecap="round"/></svg>
<div class="t" style="left:621.80px;top:494.90px;font-size:28.6px;font-weight:400;color:#787774;letter-spacing:-0.057px;-webkit-text-stroke:0.22px #787774;">Add view</div>
<div class="a" style="left:1815px;top:1095px;width:70px;height:70px;border-radius:50%;background:#fff;border:2px solid #e3e2e0;box-shadow:0 4px 12px rgba(15,15,15,0.06)"></div>
<svg style="left:1830px;top:1110px;width:44px;height:44px" viewBox="0 0 44 44" ><g fill="#2f2e2a"><path d="M13.9,8 C14.4,12.8 15.6,14 20.5,14.8 C15.6,15.6 14.4,16.8 13.9,21.6 C13.4,16.8 12.2,15.6 7.2,14.8 C12.2,14 13.4,12.8 13.9,8 Z"/><path d="M26.5,14.4 C27.4,22.6 29.2,24.6 38,26 C29.2,27.4 27.4,29.4 26.5,38 C25.6,29.4 23.8,27.4 15,26 C23.8,24.6 25.6,22.6 26.5,14.4 Z"/></g></svg>
</div></body></html>
